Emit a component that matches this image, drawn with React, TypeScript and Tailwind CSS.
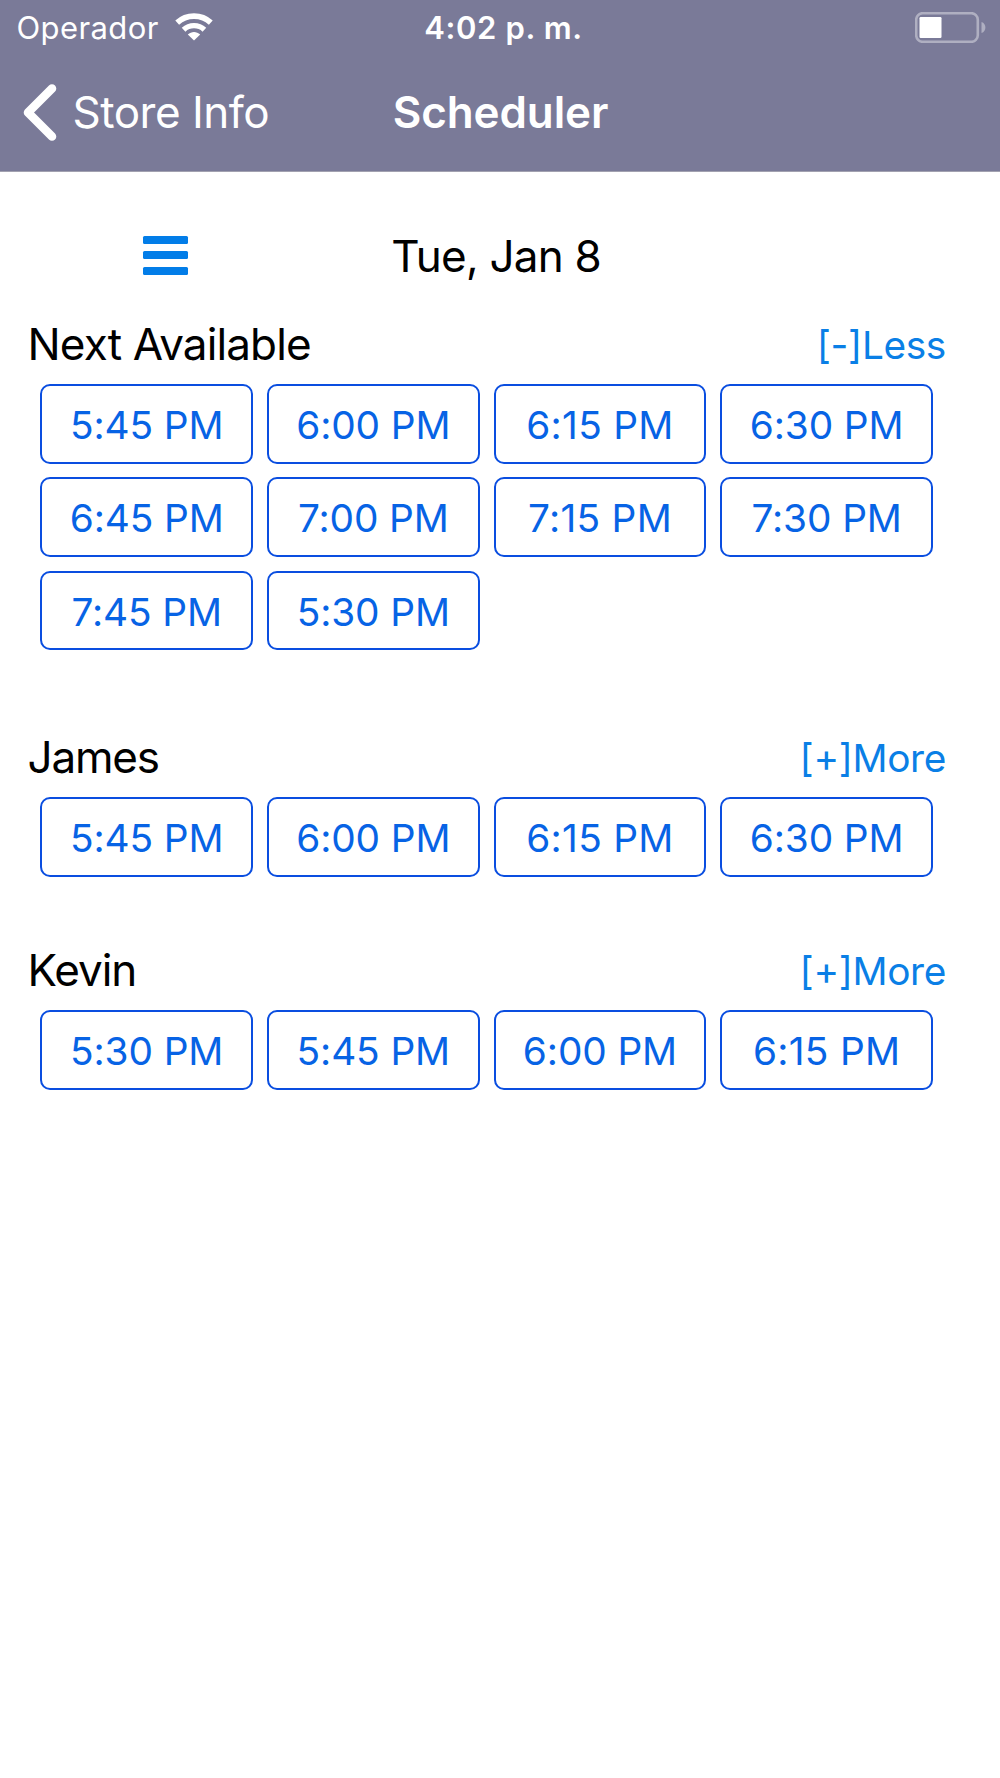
import { useState } from "react";

type Provider = {
  name: string;
  slots: string[];
  expanded: boolean;
  className: string;
};

const providers: Provider[] = [
  {
    name: "Next Available",
    slots: [
      "5:45 PM", "6:00 PM", "6:15 PM", "6:30 PM",
      "6:45 PM", "7:00 PM", "7:15 PM", "7:30 PM",
      "7:45 PM", "5:30 PM",
    ],
    expanded: true,
    className: "h-[413px] tracking-[-0.87px]",
  },
  {
    name: "James",
    slots: ["5:45 PM", "6:00 PM", "6:15 PM", "6:30 PM"],
    expanded: false,
    className: "h-[213px] tracking-[-1.2px]",
  },
  {
    name: "Kevin",
    slots: ["5:30 PM", "5:45 PM", "6:00 PM", "6:15 PM"],
    expanded: false,
    className: "h-[213px] tracking-[-1.1px]",
  },
];

function WifiIcon() {
  return (
    <svg className="ml-[16px] mt-[-2px] h-[28px] w-[38px]" viewBox="0 0 38 28" fill="none">
      <path d="M2.2 9.6C11.5 0.9 26.5 0.9 35.8 9.6" stroke="white" strokeWidth="5.6" />
      <path d="M8.6 16.7C14.4 11.3 23.6 11.3 29.4 16.7" stroke="white" strokeWidth="5.4" />
      <path d="M19 27.6L12.8 21.6C16.4 18.2 21.6 18.2 25.2 21.6Z" fill="white" />
    </svg>
  );
}

function BatteryIcon() {
  return (
    <svg className="h-[31px] w-[72px]" viewBox="0 0 72 31">
      <rect x="1.2" y="1.2" width="61.6" height="28.6" rx="6.5" fill="none" stroke="#afafc1" strokeWidth="2.6" />
      <rect x="4.5" y="5" width="22" height="21" rx="1.2" fill="white" />
      <path d="M66.5 10C71.7 11.5 71.7 19.5 66.5 21Z" fill="#afafc1" />
    </svg>
  );
}

function SlotButton({ time }: { time: string }) {
  const tracking = time.includes("1") ? "tracking-[0.3px]" : "tracking-[-0.1px]";

  return (
    <button className={`h-[79.5px] w-[212.67px] rounded-[10px] border-2 border-[#0a4ee0] pt-px text-[38.8px] font-[380] leading-[75px] text-[#0763e5] ${tracking}`}>
      {time}
    </button>
  );
}

function ProviderSection({ provider }: { provider: Provider }) {
  const [expanded, setExpanded] = useState(provider.expanded);
  const slots = expanded ? provider.slots : provider.slots.slice(0, 4);

  return (
    <section className={provider.className}>
      <div className="flex h-[68px] justify-between pl-[27.6px] pr-[54px]">
        <h2 className="text-[44px] leading-[56px] text-black">{provider.name}</h2>
        <button
          className="h-[56px] text-[38.8px] leading-[57px] tracking-[-0.35px] text-[#0a7fe6]"
          onClick={() => setExpanded(!expanded)}
        >
          {expanded ? "[-]Less" : "[+]More"}
        </button>
      </div>
      <div className="flex flex-wrap gap-x-[14px] gap-y-[13.8px] pl-[40.33px]">
        {slots.map((time) => (
          <SlotButton key={time} time={time} />
        ))}
      </div>
    </section>
  );
}

export default function App() {
  return (
    <div className="h-[1778px] w-[1000px] overflow-hidden bg-white font-['Inter','Liberation_Sans',sans-serif]">
      <header className="h-[172px] border-b border-[#a2a1b0] bg-[#7a7a98] text-white">
        {/* Status bar */}
        <div className="grid h-[55px] grid-cols-3 items-center pl-[16px] pr-[13px]">
          <div className="flex items-center text-[31px] leading-[54px]">
            <span className="pl-[0.5px] pt-px tracking-[0.4px]">Operador</span>
            <WifiIcon />
          </div>
          <div className="pl-[4px] pt-px text-center text-[31px] font-semibold leading-[54px] tracking-[0.6px]">4:02 p. m.</div>
          <div className="flex justify-end">
            <BatteryIcon />
          </div>
        </div>

        {/* Navigation bar */}
        <div className="grid h-[115px] grid-cols-3 items-center pl-[23px] pr-[23px]">
          <button className="flex items-center">
            <svg className="h-[57px] w-[34px]" viewBox="0 0 34 57" fill="none">
              <path d="M29 4.5L5 28.5L29 52.5" stroke="white" strokeWidth="8.6" strokeLinecap="round" strokeLinejoin="round" />
            </svg>
            <span className="ml-[15.5px] whitespace-nowrap pb-[2px] text-[44px] leading-[56px] tracking-[-0.5px]">Store Info</span>
          </button>
          <h1 className="pb-[2px] pl-px text-center text-[44px] font-semibold leading-[56px] tracking-[-0.1px]">Scheduler</h1>
        </div>
      </header>

      <main>
        <div className="flex h-[144px] items-start pl-[143px] pt-[56px]">
          <button className="mt-[8px] flex w-[45.3px] flex-col gap-[7.4px]">
            <span className="h-[8px] rounded-[1.5px] bg-[#027de8]" />
            <span className="h-[8px] rounded-[1.5px] bg-[#027de8]" />
            <span className="h-[8px] rounded-[1.5px] bg-[#027de8]" />
          </button>
          <p className="ml-[203px] text-[44px] leading-[56px] tracking-[-0.75px] text-black">Tue, Jan 8</p>
        </div>
        {providers.map((provider) => (
          <ProviderSection key={provider.name} provider={provider} />
        ))}
      </main>
    </div>
  );
}
